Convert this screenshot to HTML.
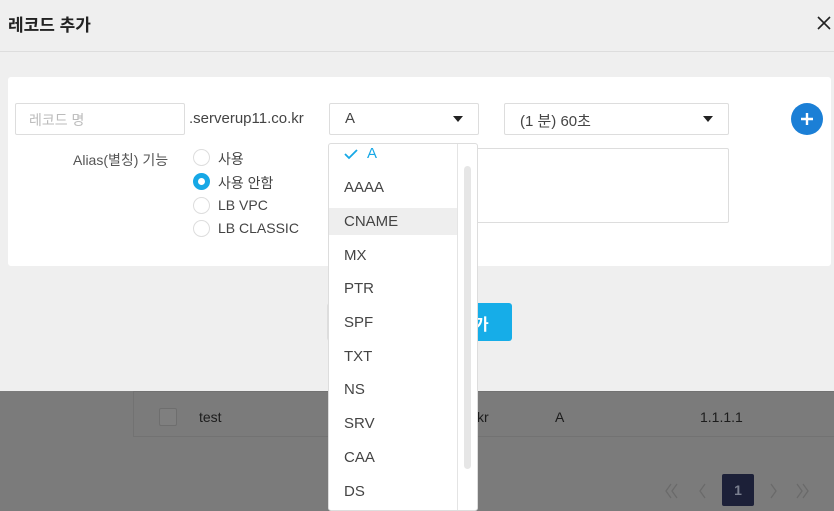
<!DOCTYPE html>
<html><head><meta charset="utf-8"><style>
*{margin:0;padding:0;box-sizing:border-box}
body{width:834px;height:511px;overflow:hidden;position:relative;background:#efefef;font-family:"Liberation Sans","Noto Sans CJK KR",sans-serif;color:#333}
.a{position:absolute}
.box{position:absolute;background:#fff;border:1px solid #ddd;border-radius:2px}
.tri{position:absolute;width:0;height:0;border-left:5px solid transparent;border-right:5px solid transparent;border-top:6px solid #222}
.radio{position:absolute;width:17px;height:17px;border-radius:50%;border:1px solid #ddd;background:#fff}
.it{position:absolute;left:15px;font-size:15px;color:#444}
</style></head><body>
<div class="a" style="left:0;top:0;width:834px;height:52px;border-bottom:1px solid #ddd"></div>
<div class="a" style="left:8px;top:11px;font-size:17px;font-weight:bold;color:#222">레코드 추가</div>
<svg class="a" style="left:817px;top:16px" width="14" height="14"><path d="M1 1L13 13M13 1L1 13" stroke="#222" stroke-width="1.6"/></svg>
<div class="a" style="left:8px;top:77px;width:823px;height:189px;background:#fff;border-radius:3px"></div>
<div class="box" style="left:15px;top:103px;width:170px;height:32px"></div>
<div class="a" style="left:29px;top:110px;font-size:14px;color:#bbb">레코드 명</div>
<div class="a" style="left:189px;top:110px;font-size:15px;color:#444">.serverup11.co.kr</div>
<div class="box" style="left:329px;top:103px;width:150px;height:32px"></div>
<div class="a" style="left:345px;top:110px;font-size:15px;color:#444">A</div>
<div class="tri" style="left:453px;top:116px"></div>
<div class="box" style="left:504px;top:103px;width:225px;height:32px"></div>
<div class="a" style="left:520px;top:110px;font-size:15px;color:#444">(1 분) 60초</div>
<div class="tri" style="left:703px;top:116px"></div>
<div class="a" style="left:791px;top:103px;width:32px;height:32px;border-radius:50%;background:#1b7fd6"></div>
<svg class="a" style="left:799px;top:111px" width="16" height="16"><path d="M8 2V14M2 8H14" stroke="#fff" stroke-width="2.4"/></svg>
<div class="box" style="left:470px;top:148px;width:259px;height:75px"></div>
<div class="a" style="left:73px;top:150px;font-size:14px;color:#555">Alias(별칭) 기능</div>
<div class="radio" style="left:193px;top:149px"></div><div class="a" style="left:218px;top:149px;font-size:14px;color:#444">사용</div>
<div class="radio" style="left:193px;top:173px;border:5px solid #16a8e6"></div><div class="a" style="left:218px;top:173px;font-size:14px;color:#444">사용 안함</div>
<div class="radio" style="left:193px;top:197px"></div><div class="a" style="left:218px;top:197px;font-size:14px;color:#444">LB VPC</div>
<div class="radio" style="left:193px;top:220px"></div><div class="a" style="left:218px;top:220px;font-size:14px;color:#444">LB CLASSIC</div>
<div class="a" style="left:327px;top:303px;width:60px;height:38px;background:#fff;border:1px solid #ddd;border-radius:3px"></div>
<div class="a" style="left:440px;top:303px;width:72px;height:38px;background:#16ade8;border-radius:3px;color:#fff;font-weight:bold;font-size:16px;padding:8px 0 0 34px">가</div>
<div class="a" style="left:0;top:391px;width:834px;height:120px;background:#7b7b7b"></div>
<div class="a" style="left:133px;top:391px;width:701px;height:46px;border-bottom:1px solid #727272;border-left:1px solid #727272;border-top:1px solid #727272"></div>
<div class="a" style="left:159px;top:408px;width:18px;height:18px;border:1px solid #6e6e6e;border-radius:2px;background:#7f7f7f"></div>
<div class="a" style="left:199px;top:409px;font-size:14px;color:#1c1c1c">test</div>
<div class="a" style="left:477px;top:409px;font-size:14px;color:#1c1c1c">kr</div>
<div class="a" style="left:555px;top:409px;font-size:14px;color:#1c1c1c">A</div>
<div class="a" style="left:700px;top:409px;font-size:14px;color:#1c1c1c">1.1.1.1</div>
<svg class="a" style="left:664px;top:482px" width="150" height="18" fill="none" stroke="#6a6a6a" stroke-width="1.3">
<path d="M7 2L2 9L7 16M13 2L8 9L13 16"/>
<path d="M41 2L36 9L41 16"/>
<path d="M107 2L112 9L107 16"/>
<path d="M133 2L138 9L133 16M139 2L144 9L139 16"/>
</svg>
<div class="a" style="left:722px;top:474px;width:32px;height:32px;background:#1c2038;border-radius:2px;color:#7b8090;font-size:14px;font-weight:bold;text-align:center;line-height:32px">1</div>
<div class="a" style="left:328px;top:143px;width:150px;height:368px;background:#fff;border:1px solid #ddd;border-radius:3px;overflow:hidden">
<div class="a" style="left:128px;top:0;width:1px;height:368px;background:#e4e4e4"></div>
<div class="a" style="left:135px;top:22px;width:7px;height:303px;background:#e6e6e6;border-radius:4px"></div>
<div class="a" style="left:0;top:64px;width:128px;height:27px;background:#eeeeee"></div>
<svg class="a" style="left:15px;top:4px" width="14" height="12"><path d="M1 6L5 10L13 2" stroke="#16a8e6" stroke-width="1.8" fill="none"/></svg>
<div class="it" style="left:38px;top:1px;color:#16a8e6">A</div>
<div class="it" style="top:35px">AAAA</div>
<div class="it" style="top:69px">CNAME</div>
<div class="it" style="top:103px">MX</div>
<div class="it" style="top:136px">PTR</div>
<div class="it" style="top:170px">SPF</div>
<div class="it" style="top:204px">TXT</div>
<div class="it" style="top:237px">NS</div>
<div class="it" style="top:271px">SRV</div>
<div class="it" style="top:305px">CAA</div>
<div class="it" style="top:339px">DS</div>
</div>
</body></html>
